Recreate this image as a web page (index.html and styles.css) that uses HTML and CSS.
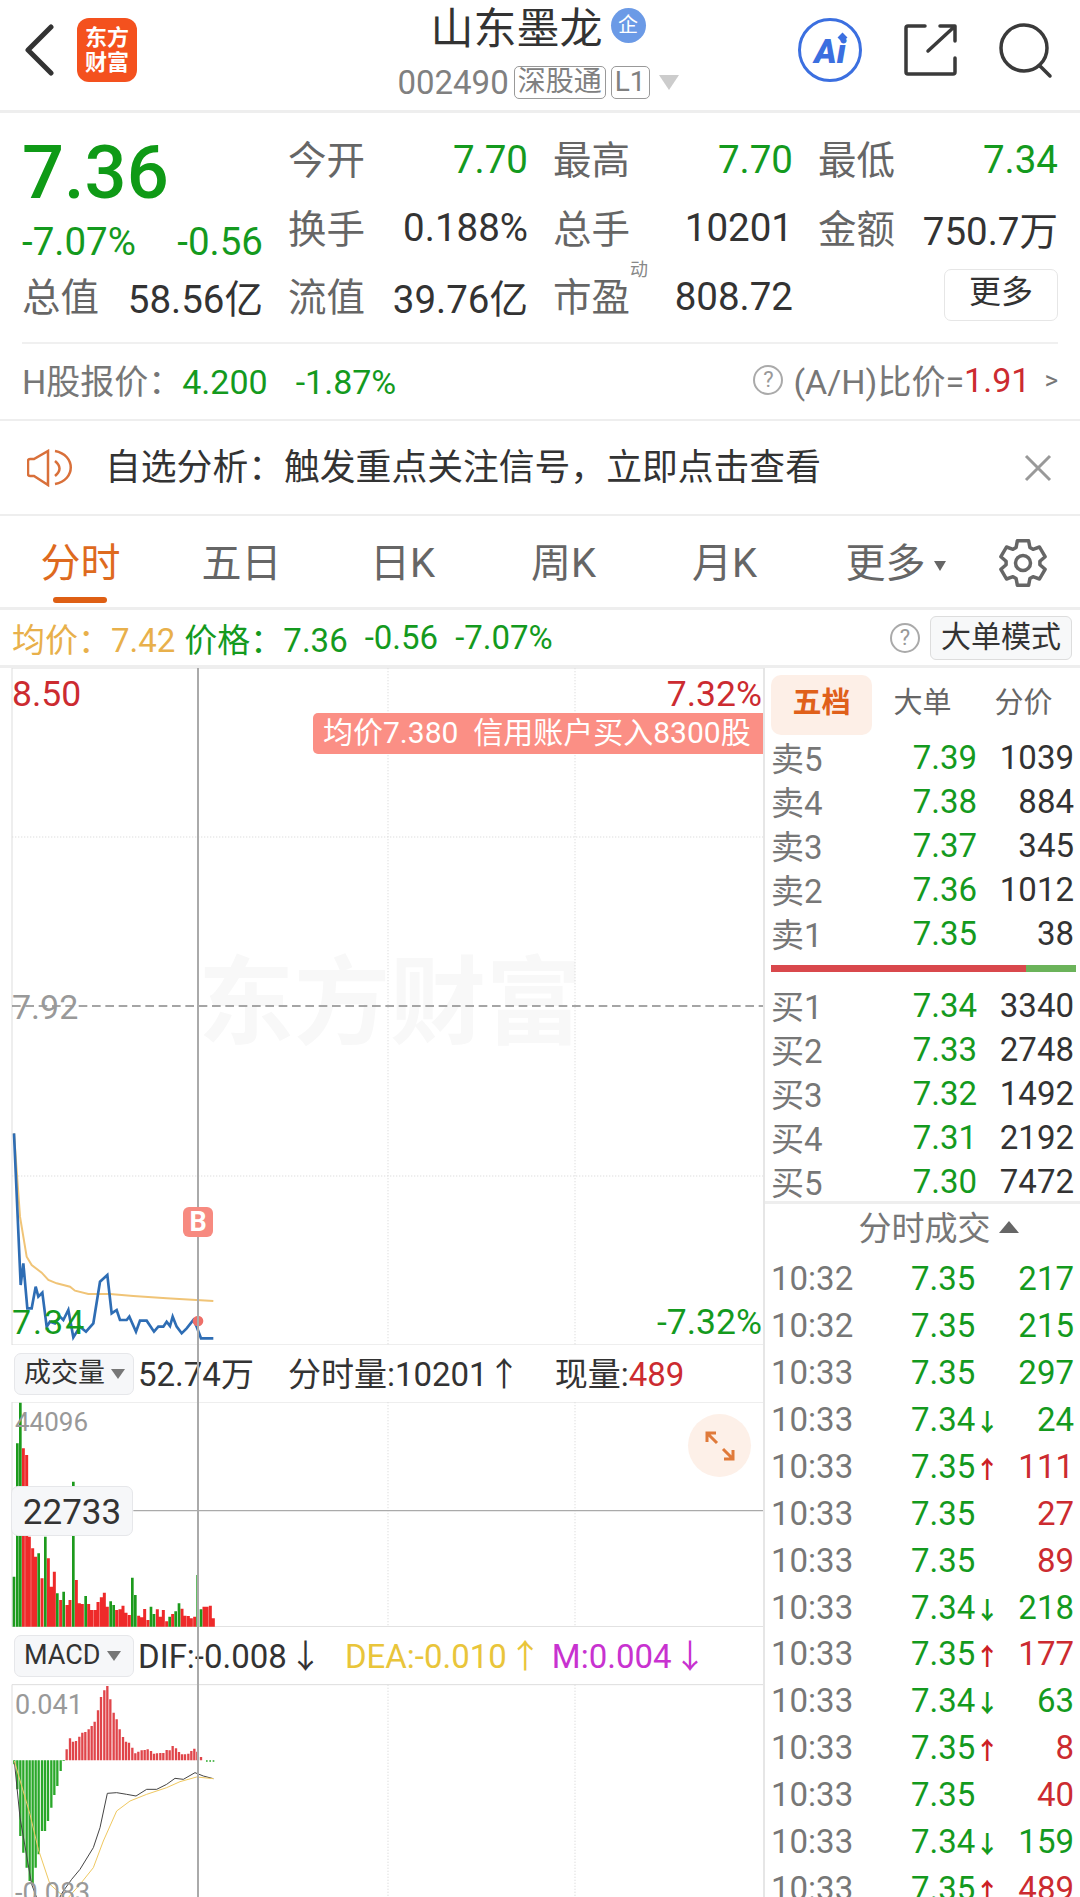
FILE: index.html
```html
<!DOCTYPE html>
<html lang="zh-CN">
<head>
    <meta charset="UTF-8">
    <meta name="viewport" content="width=device-width, initial-scale=1.0">
    <title>山东墨龙</title>
    <link rel="stylesheet" href="styles.css">
</head>
<body>
<div class="page">
    <header class="topbar">
        <div class="topbar-left">
            <svg width="30" height="52" viewBox="0 0 30 52"><path d="M26 3 3 26l23 23" fill="none" stroke="#333" stroke-width="5" stroke-linecap="round" stroke-linejoin="round"/></svg>
            <div class="logo"><span>东方</span><span>财富</span></div>
        </div>
        <div class="topbar-mid">
            <div class="title">山东墨龙<span class="badge-qi">企</span></div>
            <div class="subtitle">002490<span class="tag">深股通</span><span class="tag">L1</span><i class="caret-down"></i></div>
        </div>
        <div class="topbar-right">
            <div class="ai">Ai</div>
            <svg class="ic-share" width="54" height="54" viewBox="0 0 54 54"><path d="M22 3H5a2 2 0 0 0-2 2v44a2 2 0 0 0 2 2h45a2 2 0 0 0 2-2V35M25 28 51 4M37 3h15v15" fill="none" stroke="#3a3a3a" stroke-width="3.5" stroke-linecap="round" stroke-linejoin="round"/></svg>
            <svg class="ic-search" width="54" height="56" viewBox="0 0 54 56"><circle cx="25" cy="25" r="23" fill="none" stroke="#3a3a3a" stroke-width="3.5"/><path d="m41 43 10 10" stroke="#3a3a3a" stroke-width="3.5" stroke-linecap="round"/></svg>
        </div>
    </header>

    <section class="quote">
        <div class="price-block">
            <div class="price">7.36</div>
            <div class="change"><span>-7.07%</span><span>-0.56</span></div>
        </div>
        <div class="cell"><span class="lbl">今开</span><span class="val green">7.70</span></div>
        <div class="cell"><span class="lbl">最高</span><span class="val green">7.70</span></div>
        <div class="cell"><span class="lbl">最低</span><span class="val green">7.34</span></div>
        <div class="cell"><span class="lbl">换手</span><span class="val">0.188%</span></div>
        <div class="cell"><span class="lbl">总手</span><span class="val">10201</span></div>
        <div class="cell"><span class="lbl">金额</span><span class="val">750.7万</span></div>
        <div class="cell"><span class="lbl">总值</span><span class="val">58.56亿</span></div>
        <div class="cell"><span class="lbl">流值</span><span class="val">39.76亿</span></div>
        <div class="cell"><span class="lbl">市盈<sup class="dyn">动</sup></span><span class="val">808.72</span></div>
        <div class="cell cell-end"><span class="more-btn">更多</span></div>
    </section>

    <section class="hshare">
        <div class="hshare-left">H股报价&#xFF1A;<span class="green">4.200</span><span class="green hs-b">-1.87%</span></div>
        <div class="hshare-right"><span class="help">?</span>(A/H)比价=<span class="red">1.91</span><span class="gt">&gt;</span></div>
    </section>

    <section class="notice">
        <svg width="48" height="38" viewBox="0 0 48 38"><path d="M3 10H7L21 2V36L7 27H3a2 2 0 0 1-2-2V12a2 2 0 0 1 2-2zM28 12Q37 19.500 28 27M28 2c21 4 21 29 0 33" fill="none" stroke="#d9703a" stroke-width="2.500"/></svg>
        <span class="notice-text">自选分析&#xFF1A;触发重点关注信号&#xFF0C;立即点击查看</span>
        <svg class="notice-close" width="28" height="28" viewBox="0 0 28 28"><path d="m2 2 24 24M26 2 2 26" stroke="#999" stroke-width="3"/></svg>
    </section>

    <nav class="tabs">
        <span class="tab active">分时</span>
        <span class="tab">五日</span>
        <span class="tab">日K</span>
        <span class="tab">周K</span>
        <span class="tab">月K</span>
        <span class="tab tab-more">更多<i class="caret-small"></i></span>
        <svg class="gear" width="48" height="52" viewBox="-1 -1 48 52"><path d="M16.100 9.500 17.400 2.700H28.600L29.900 9.500 33 11.300 39.500 9 45.100 18.700 39.900 23.200V26.800L45.100 31.300 39.500 41 33 38.700 29.900 40.500 28.600 47.300H17.400L16.100 40.500 13 38.700 6.500 41 .9 31.300 6.100 26.800V23.200L.9 18.700 6.500 9 13 11.300z" fill="none" stroke="#666" stroke-width="3.500" stroke-linejoin="round"/><circle cx="23" cy="25" r="7.500" fill="none" stroke="#666" stroke-width="3.500"/></svg>
    </nav>

    <section class="infoline">
        <span class="avg">均价&#xFF1A;7.42</span>
        <span class="green info-price">价格&#xFF1A;7.36</span>
        <span class="green">-0.56</span>
        <span class="green">-7.07%</span>
        <span class="help info-help">?</span>
        <span class="mode-btn">大单模式</span>
    </section>

    <main class="board">
        <div class="charts">
            <div class="cursor"></div>

            <div class="chart chart-price">
                <svg class="plot" width="763" height="677" viewBox="0 -1296 2289 2031">
                    <path d="M36 -1296V735H2289M36 -1296H2289" fill="none" stroke="#ddd" stroke-width="3"/>
                    <path d="M1164 -1296V735M1725 -1296V735M36 -789H2289M36 228H2289" fill="none" stroke="#ddd" stroke-width="3" stroke-dasharray="4 5"/>
                    <path d="M36 -282H2289" stroke="#888" stroke-width="4" stroke-dasharray="26 14"/>
                    <path d="M42 100 60 350 80 470 95 495 125 518 145 540 170 550 210 560 225 572 265 582 330 582 400 588 500 595 640 603" fill="none" stroke="#f0c477" stroke-width="6"/>
                    <path d="M42 100 62 555 70 490 82 625H95L107 560 115 590 127 578 140 680 150 665 165 670 180 650 190 660 205 630 220 712 240 680 258 695 280 670 300 545 322 525 335 640 350 630 360 660H380L388 650 408 695 420 662H440L462 695 475 680H490L500 665 510 678 518 650 530 680 545 700 560 685 580 660 590 680 603 715H640" fill="none" stroke="#2e6db4" stroke-width="8"/>
                    <path d="M594 410V650" stroke="#e0706a" stroke-width="6" stroke-dasharray="22 12"/>
                    <circle cx="594" cy="663" r="16" fill="#ee6f68"/>
                </svg>
                <span class="watermark">东方财富</span>
                <span class="axis red at-tl">8.50</span>
                <span class="axis red at-tr">7.32%</span>
                <span class="axis gray at-ml">7.92</span>
                <span class="axis green at-bl">7.34</span>
                <span class="axis green at-br">-7.32%</span>
                <span class="deal-tip">均价7.380&nbsp;&nbsp;信用账户买入8300股</span>
                <span class="b-mark">B</span>
            </div>

            <div class="statrow">
                <span class="select">成交量<i class="caret-down dark"></i></span>
                <span class="stat stat-a">52.74万</span>
                <span class="stat stat-b">分时量:10201↑</span>
                <span class="stat stat-c">现量:<em class="red">489</em></span>
            </div>

            <div class="chart chart-vol">
                <svg class="plot" width="763" height="225" viewBox="0 36 2289 675">
                    <path d="M36 36H2289M36 36V710H2289" fill="none" stroke="#ddd" stroke-width="3"/>
                    <path d="M1164 36V710M1725 36V710" stroke="#ddd" stroke-width="3" stroke-dasharray="4 5"/>
                    <path d="M400 362H2289" stroke="#aaa" stroke-width="4"/>
                    <path d="M70 710V175M80 710V195M88 710V440M98 710V475M107 710V500M126 710V565M145 710V505M154 710V590M163 710V545M182 710V630M201 710V645M210 710V630M229 710V570M238 710V640M247 710V642M266 710V642M275 710V660M285 710V660M294 710V636M304 710V622M313 710V608M322 710V650M350 710V660M360 710V658M369 710V647M378 710V668M388 710V675M416 710V677M425 710V682M434 710V657M444 710V690M472 710V658M481 710V680M490 710V660M500 710V694M518 710V672M546 710V656M555 710V677M565 710V678M574 710V685M584 710V680M612 710V650M621 710V650M631 710V647M640 710V685" stroke="#ee2a2a" stroke-width="9"/>
                    <path d="M42 710V560M52 710V160M61 710V38M116 710V490M136 710V440M172 710V610M191 710V605M220 710V275M257 710V618M332 710V634M341 710V645M397 710V563M406 710V615M453 710V650M462 710V672M509 710V680M527 710V664M537 710V640M593 710V555M603 710V658" stroke="#1c9a1c" stroke-width="8"/>
                </svg>
                <span class="axis-sm vol-top">44096</span>
                <span class="level-tag">22733</span>
                <span class="expand">
                    <svg width="32" height="32" viewBox="0 0 32 32"><path d="M3 12V3h9M3 3l10 10M29 20v9h-9M29 29 19 19" fill="none" stroke="#e07a3a" stroke-width="3"/></svg>
                </span>
            </div>

            <div class="statrow statrow-macd">
                <span class="select">MACD<i class="caret-down dark"></i></span>
                <span class="stat stat-a">DIF:-0.008<b class="st-arrow">↓</b></span>
                <span class="stat stat-dea">DEA:-0.010<b class="st-arrow">↑</b></span>
                <span class="stat stat-m">M:0.004<b class="st-arrow">↓</b></span>
            </div>

            <div class="chart chart-macd">
                <svg class="plot" width="763" height="214" viewBox="0 189 2289 642">
                    <path d="M36 191H2289M36 191V831" fill="none" stroke="#ddd" stroke-width="3"/>
                    <path d="M1164 191V831M1725 191V831" stroke="#ddd" stroke-width="3" stroke-dasharray="4 5"/>
                    <path d="M200 418V385M210 418V352M219 418V362M228 418V360M238 418V347M247 418V335M256 418V333M266 418V325M275 418V315M284 418V302M294 418V268M303 418V228M313 418V208M322 418V195M331 418V235M341 418V275M350 418V295M359 418V325M369 418V348M378 418V362M387 418V365M397 418V380M406 418V397M415 418V392M425 418V388M434 418V387M443 418V385M453 418V390M462 418V398M471 418V397M481 418V396M490 418V396M500 418V387M509 418V388M518 418V375M528 418V382M537 418V393M546 418V400M555 418V400M565 418V398M574 418V390M583 418V383M592 418V392M603 418V408" stroke="#e0454a" stroke-width="7"/>
                    <path d="M43 418V430M52 418V505M61 418V645M70 418V695M80 418V740M89 418V780M98 418V790M107 418V740M116 418V700M126 418V630M135 418V630M144 418V600M154 418V560M163 418V522M172 418V495M182 418V450M191 418V420" stroke="#2aa82a" stroke-width="7"/>
                    <path d="M618 420H646" stroke="#2aa82a" stroke-width="5" stroke-dasharray="5 5"/>
                    <path d="M43 420 60 590 95 790 110 830 150 880 190 810 215 775 240 745 280 680 300 620 322 517 350 515 380 520 408 525 440 505 470 505 500 490 525 472 550 475 585 455 610 465 640 473" fill="none" stroke="#444" stroke-width="3"/>
                    <path d="M43 420 90 580 115 685 150 790 200 835 240 790 280 740 310 660 350 570 390 540 440 520 500 500 540 482 590 468 640 473" fill="none" stroke="#efc860" stroke-width="3"/>
                </svg>
                <span class="axis-sm macd-top">0.041</span>
                <span class="axis-sm macd-bot">-0.083</span>
            </div>
        </div>

        <aside class="side">
            <div class="side-tabs">
                <span class="side-tab active">五档</span>
                <span class="side-tab">大单</span>
                <span class="side-tab">分价</span>
            </div>
            <div class="book"><span class="b-lbl">卖5</span><span class="green b-p">7.39</span><span class="b-q">1039</span></div>
            <div class="book"><span class="b-lbl">卖4</span><span class="green b-p">7.38</span><span class="b-q">884</span></div>
            <div class="book"><span class="b-lbl">卖3</span><span class="green b-p">7.37</span><span class="b-q">345</span></div>
            <div class="book"><span class="b-lbl">卖2</span><span class="green b-p">7.36</span><span class="b-q">1012</span></div>
            <div class="book"><span class="b-lbl">卖1</span><span class="green b-p">7.35</span><span class="b-q">38</span></div>
            <div class="ratio"><span class="ratio-red"></span><span class="ratio-green"></span></div>
            <div class="book"><span class="b-lbl">买1</span><span class="green b-p">7.34</span><span class="b-q">3340</span></div>
            <div class="book"><span class="b-lbl">买2</span><span class="green b-p">7.33</span><span class="b-q">2748</span></div>
            <div class="book"><span class="b-lbl">买3</span><span class="green b-p">7.32</span><span class="b-q">1492</span></div>
            <div class="book"><span class="b-lbl">买4</span><span class="green b-p">7.31</span><span class="b-q">2192</span></div>
            <div class="book"><span class="b-lbl">买5</span><span class="green b-p">7.30</span><span class="b-q">7472</span></div>

            <div class="ticks-head">分时成交<i class="caret-up"></i></div>
            <div class="tick"><span class="t-time">10:32</span><span class="green">7.35</span><span class="t-q green">217</span></div>
            <div class="tick"><span class="t-time">10:32</span><span class="green">7.35</span><span class="t-q green">215</span></div>
            <div class="tick"><span class="t-time">10:33</span><span class="green">7.35</span><span class="t-q green">297</span></div>
            <div class="tick"><span class="t-time">10:33</span><span class="green">7.34<b class="arr">↓</b></span><span class="t-q green">24</span></div>
            <div class="tick"><span class="t-time">10:33</span><span class="green">7.35<b class="arr red">↑</b></span><span class="t-q red">111</span></div>
            <div class="tick"><span class="t-time">10:33</span><span class="green">7.35</span><span class="t-q red">27</span></div>
            <div class="tick"><span class="t-time">10:33</span><span class="green">7.35</span><span class="t-q red">89</span></div>
            <div class="tick"><span class="t-time">10:33</span><span class="green">7.34<b class="arr">↓</b></span><span class="t-q green">218</span></div>
            <div class="tick"><span class="t-time">10:33</span><span class="green">7.35<b class="arr red">↑</b></span><span class="t-q red">177</span></div>
            <div class="tick"><span class="t-time">10:33</span><span class="green">7.34<b class="arr">↓</b></span><span class="t-q green">63</span></div>
            <div class="tick"><span class="t-time">10:33</span><span class="green">7.35<b class="arr red">↑</b></span><span class="t-q red">8</span></div>
            <div class="tick"><span class="t-time">10:33</span><span class="green">7.35</span><span class="t-q red">40</span></div>
            <div class="tick"><span class="t-time">10:33</span><span class="green">7.34<b class="arr">↓</b></span><span class="t-q green">159</span></div>
            <div class="tick"><span class="t-time">10:33</span><span class="green">7.35<b class="arr red">↑</b></span><span class="t-q red">489</span></div>
        </aside>
    </main>
</div>
</body>
</html>
```

FILE: styles.css
```css
* {
    box-sizing: border-box;
}
html, body {
    margin: 0;
    padding: 0;
    background: #fff;
}
body {
    font-family: Roboto, "Noto Sans CJK SC", sans-serif;
    color: #333;
}
.page {
    width: 1080px;
    height: 1897px;
    overflow: hidden;
}
.green { color: #149a1e; }
.red { color: #cc2b30; }
.gray { color: #999; }

/* top bar */
.topbar {
    height: 113px;
    display: flex;
    align-items: flex-start;
    border-bottom: 3px solid #eee;
}
.topbar-left, .topbar-right {
    flex: 1 1 0;
    display: flex;
    align-items: center;
    height: 100px;
}
.topbar-left {
    padding-left: 25px;
}
.logo {
    width: 60px;
    height: 64px;
    margin-left: 22px;
    background: #f4511e;
    border-radius: 12px;
    color: #fff;
    font-size: 22px;
    font-weight: 700;
    line-height: 25px;
    display: flex;
    flex-direction: column;
    align-items: center;
    justify-content: center;
}
.topbar-mid {
    width: 300px;
    text-align: center;
}
.title {
    font-size: 43px;
    line-height: 54px;
    height: 54px;
    margin-top: 2px;
    display: flex;
    justify-content: center;
    align-items: center;
    white-space: nowrap;
}
.badge-qi {
    width: 35px;
    height: 35px;
    margin-left: 8px;
    margin-top: -8px;
    border-radius: 50%;
    background: #6b9ae6;
    color: #fff;
    font-size: 20px;
    line-height: 35px;
}
.subtitle {
    height: 50px;
    margin-top: 1px;
    display: flex;
    justify-content: center;
    align-items: center;
    font-size: 33px;
    color: #808080;
    white-space: nowrap;
}
.tag {
    margin-left: 5px;
    padding: 0 3px;
    height: 33px;
    border: 1px solid #999;
    border-radius: 5px;
    font-size: 28px;
    line-height: 29px;
}
.caret-down {
    display: inline-block;
    margin-left: 9px;
    border-left: 10px solid transparent;
    border-right: 10px solid transparent;
    border-top: 15px solid #ccc;
}
.caret-down.dark {
    border-left-width: 7px;
    border-right-width: 7px;
    border-top: 10px solid #777;
}
.topbar-right {
    justify-content: flex-end;
    padding-right: 29px;
}
.ai {
    width: 64px;
    height: 64px;
    position: relative;
    border: 3px solid #3b6fe0;
    border-radius: 50%;
    color: #3b6fe0;
    font-size: 34px;
    font-style: italic;
    font-weight: 900;
    line-height: 60px;
    text-align: center;
}
.ai::after {
    content: "";
    position: absolute;
    right: 13px;
    top: 13px;
    width: 7px;
    height: 7px;
    background: #3b6fe0;
    transform: rotate(45deg);
}
.ic-share {
    margin-left: 41px;
    margin-top: -1px;
}
.ic-search {
    margin-left: 42px;
    margin-right: -2px;
    margin-top: 2px;
}

/* quote */
.quote {
    display: grid;
    grid-template-columns: 241px 240px 240px 240px;
    grid-auto-rows: 68.5px;
    column-gap: 25px;
    padding: 12px 22px 0;
    height: 229px;
}
.price-block {
    grid-row: span 2;
}
.price {
    font-size: 74px;
    font-weight: 500;
    line-height: 74px;
    margin-top: 11px;
    color: #0f9a16;
}
.change {
    display: flex;
    justify-content: space-between;
    font-size: 38.500px;
    line-height: 44px;
    margin-top: 10px;
    color: #149a1e;
}
.cell {
    display: flex;
    justify-content: space-between;
    align-items: center;
    font-size: 38.500px;
    white-space: nowrap;
}
.lbl {
    color: #666;
    position: relative;
    margin-bottom: 4px;
}
.dyn {
    position: absolute;
    top: -7px;
    left: 77px;
    font-size: 18px;
    line-height: 22px;
    color: #888;
}
.cell-end {
    justify-content: flex-end;
}
.more-btn {
    width: 114px;
    height: 52px;
    border: 1px solid #e6e6e6;
    border-radius: 7px;
    font-size: 32px;
    line-height: 44px;
    text-align: center;
    margin-top: -2px;
}

/* h share */
.hshare {
    margin: 0 22px;
    height: 77px;
    padding-bottom: 4px;
    border-top: 2px solid #f0f0f0;
    display: flex;
    justify-content: space-between;
    align-items: center;
    font-size: 34px;
    color: #777;
    white-space: nowrap;
}
.hs-b { margin-left: 28px; }
.hshare-right {
    display: flex;
    align-items: center;
}
.help {
    width: 30px;
    height: 30px;
    border: 2px solid #aaa;
    border-radius: 50%;
    color: #999;
    font-size: 22px;
    line-height: 26px;
    text-align: center;
    margin-right: 10px;
}
.gt {
    margin-left: 14px;
    font-size: 26px;
}

/* notice */
.notice {
    height: 97px;
    border-top: 2px solid #eee;
    border-bottom: 2px solid #eee;
    display: flex;
    align-items: center;
    padding-left: 27px;
    font-size: 35.800px;
}
.notice-text {
    margin-left: 30px;
    margin-top: -8px;
    flex: 1;
}
.notice-close {
    margin-right: 28px;
}

/* tabs */
.tabs {
    height: 94px;
    position: relative;
    display: flex;
    align-items: center;
    border-bottom: 3px solid #eee;
    font-size: 40px;
    color: #666;
}
.tab {
    width: 161px;
    line-height: 50px;
    margin-top: 4px;
    text-align: center;
    white-space: nowrap;
}
.tab-more {
    padding-left: 20px;
}
.tab.active {
    color: #de6a1e;
    position: relative;
}
.tab.active::after {
    content: "";
    position: absolute;
    left: 53px;
    top: 58px;
    width: 54px;
    height: 6px;
    border-radius: 3px;
    background: #de5f14;
}
.caret-small {
    display: inline-block;
    margin-left: 8px;
    vertical-align: 6px;
    border-left: 6px solid transparent;
    border-right: 6px solid transparent;
    border-top: 10px solid #666;
}
.gear {
    position: absolute;
    left: 999px;
    top: 21px;
}

/* info line */
.infoline {
    height: 58px;
    display: flex;
    align-items: center;
    gap: 17px;
    padding: 0 8px 0 12px;
    border-bottom: 3px solid #eee;
    font-size: 33px;
    white-space: nowrap;
}
.avg { color: #e8b04b; }
.info-price { margin-left: -8px; }
.info-help { margin-left: auto; margin-right: 0; }
.mode-btn {
    width: 142px;
    height: 44px;
    background: #f7f8f9;
    border: 1px solid #ddd;
    border-radius: 6px;
    font-size: 30px;
    line-height: 40px;
    text-align: center;
    margin-left: -7px;
}

/* charts */
.board {
    display: flex;
    height: 1229px;
}
.charts {
    width: 763px;
    position: relative;
    flex: none;
}
.cursor {
    position: absolute;
    left: 197px;
    top: 0;
    bottom: 0;
    width: 2px;
    background: #aaa;
    z-index: 3;
}
.chart {
    position: relative;
}
.chart-price { height: 677px; }
.chart-vol { height: 225px; }
.chart-macd { height: 214px; }
.plot {
    display: block;
    position: relative;
    z-index: 1;
}
.watermark {
    position: absolute;
    left: 198px;
    top: 280px;
    font-size: 96px;
    line-height: 110px;
    font-weight: 700;
    color: #f8f8f8;
}
.axis {
    position: absolute;
    z-index: 2;
    font-size: 35.500px;
    line-height: 40px;
}
.at-tl { left: 12px; top: 6px; }
.at-tr { right: 1px; top: 6px; }
.at-ml { left: 12px; top: 319px; font-size: 34px; }
.at-bl { left: 12px; top: 634px; font-size: 34px; letter-spacing: 2px; }
.at-br { right: 1px; top: 634px; }
.deal-tip {
    position: absolute;
    z-index: 2;
    left: 313px;
    right: 0;
    top: 45px;
    height: 41px;
    background: #fb8f85;
    border-radius: 5px 0 0 5px;
    color: #fff;
    font-size: 30px;
    line-height: 40px;
    padding-left: 10px;
    white-space: nowrap;
}
.b-mark {
    position: absolute;
    z-index: 4;
    left: 183px;
    top: 539px;
    width: 30px;
    height: 30px;
    background: #f78a80;
    border-radius: 6px;
    color: #fff;
    font-size: 27px;
    font-weight: 700;
    line-height: 30px;
    text-align: center;
}
.statrow {
    height: 57px;
    display: flex;
    align-items: center;
    font-size: 33px;
    padding-left: 14px;
    white-space: nowrap;
}
.stat {
    margin-bottom: 4px;
}
.select {
    width: 120px;
    height: 42px;
    background: #f6f7f9;
    border: 1px solid #e6e7ea;
    border-radius: 7px;
    font-size: 27px;
    line-height: 38px;
    padding-left: 9px;
    color: #333;
}
.select .caret-down {
    margin-left: 6px;
    vertical-align: 3px;
}
.stat-a { margin-left: 4px; }
.stat-b { margin-left: 34px; }
.stat-c { margin-left: 34px; }
.stat-c em { font-style: normal; }
.st-arrow {
    font-weight: 400;
    margin-left: 2px;
}
.stat-dea { margin-left: 23px; color: #e9c53a; }
.stat-m { margin-left: 10px; color: #c832d0; }
.axis-sm {
    position: absolute;
    z-index: 2;
    left: 15px;
    font-size: 26px;
    line-height: 30px;
    color: #999;
}
.vol-top { top: 5px; }
.macd-top { top: 6px; font-size: 27px; }
.macd-bot { top: 194px; font-size: 27px; }
.level-tag {
    position: absolute;
    z-index: 2;
    left: 11px;
    top: 84px;
    width: 122px;
    height: 50px;
    background: #f6f7f9;
    border: 1px solid #e6e7ea;
    border-radius: 7px;
    font-size: 35px;
    line-height: 51px;
    text-align: center;
}
.expand {
    position: absolute;
    z-index: 2;
    left: 688px;
    top: 12px;
    width: 63px;
    height: 63px;
    border-radius: 50%;
    background: #fdf0e8;
    display: flex;
    align-items: center;
    justify-content: center;
}

/* side panel */
.side {
    flex: 1;
    border-left: 2px solid #e6e6e6;
    padding: 0 8px 0 6px;
}
.side-tabs {
    height: 65px;
    display: flex;
    padding-top: 7px;
    font-size: 29px;
    color: #666;
}
.side-tab {
    width: 101px;
    text-align: center;
    line-height: 56px;
}
.side-tab.active {
    height: 60px;
    background: #fdefe7;
    border-radius: 10px;
    color: #e0601a;
    font-weight: 700;
}
.book {
    height: 44px;
    display: grid;
    grid-template-columns: 68px 138px 1fr;
    align-items: center;
    font-size: 33px;
}
.b-lbl { color: #777; }
.b-p { text-align: right; }
.b-q { text-align: right; }
.ratio {
    height: 7px;
    display: flex;
    margin: 12px -2px 9px 0;
}
.ratio-red {
    width: 255px;
    background: #d9484c;
}
.ratio-green {
    flex: 1;
    background: #6bb35a;
}
.ticks-head {
    margin: 0 -8px 0 -6px;
    padding-left: 30px;
    height: 54px;
    border-top: 3px solid #eee;
    font-size: 33px;
    line-height: 49px;
    color: #777;
    text-align: center;
}
.caret-up {
    display: inline-block;
    margin-left: 8px;
    vertical-align: 7px;
    border-left: 10px solid transparent;
    border-right: 10px solid transparent;
    border-bottom: 12px solid #666;
}
.tick {
    height: 46.950px;
    display: grid;
    grid-template-columns: 140px 84px 1fr;
    align-items: center;
    font-size: 33px;
    white-space: nowrap;
}
.t-time { color: #777; }
.t-q { text-align: right; }
.arr {
    font-size: 24px;
    font-weight: 700;
    color: #149a1e;
}
.arr.red { color: #cc1f26; }
```
